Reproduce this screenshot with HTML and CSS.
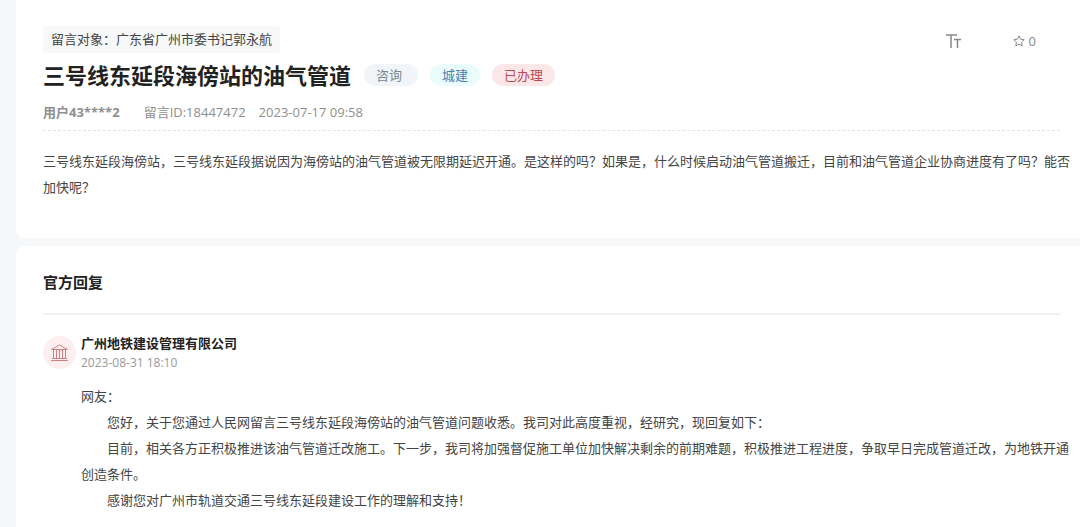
FILE: index.html
```html
<!DOCTYPE html>
<html lang="zh-CN">

<head>
    <meta charset="UTF-8">
    <meta name="viewport" content="width=device-width, initial-scale=1.0">
    <title>三号线东延段海傍站的油气管道</title>
    <link rel="stylesheet" href="styles.css">
</head>

<body>
    <article class="card message">
        <div class="top">
            <p class="target">留言对象：广东省广州市委书记郭永航</p>
            <div class="tools">
                <button type="button" class="font-btn" aria-label="字号">
                    <svg width="17" height="15" viewBox="0 0 17 15">
                        <path d="M0 1h11M5 1v13M8 5.500h7M11.500 5.500v8.500" />
                    </svg>
                </button>
                <button type="button" class="star-btn" aria-label="收藏">
                    <svg width="12" height="12" viewBox="0 0 12 12">
                        <path d="M6 .9l1.600 3.300 3.600.5-2.600 2.500.6 3.600L6 9.100l-3.200 1.700.6-3.600L.8 4.700l3.600-.5z" />
                    </svg>
                    <span>0</span>
                </button>
            </div>
        </div>

        <div class="title-row">
            <h1>三号线东延段海傍站的油气管道</h1>
            <span class="tag tag-type">咨询</span>
            <span class="tag tag-field">城建</span>
            <span class="tag tag-state">已办理</span>
        </div>

        <div class="meta">
            <b>用户43****2</b>
            <span class="msg-id">留言ID:18447472</span>
            <time>2023-07-17 09:58</time>
        </div>

        <p class="text">三号线东延段海傍站，三号线东延段据说因为海傍站的油气管道被无限期延迟开通。是这样的吗？如果是，什么时候启动油气管道搬迁，目前和油气管道企业协商进度有了吗？能否加快呢？</p>
    </article>

    <section class="card answer">
        <h2>官方回复</h2>

        <div class="reply">
            <div class="avatar">
                <svg width="19" height="18" viewBox="0 0 19 18">
                    <path d="M1.500 5.500L9.500 1l8 4.500zM1 16.500h17M2 14.500h15M3.500 5.500v9M6.500 5.500v9M9.500 5.500v9M12.500 5.500v9M15.500 5.500v9" />
                </svg>
            </div>
            <div class="reply-main">
                <h3>广州地铁建设管理有限公司</h3>
                <time>2023-08-31 18:10</time>
                <div class="text">
                    <p>网友：</p>
                    <p class="indent">您好，关于您通过人民网留言三号线东延段海傍站的油气管道问题收悉。我司对此高度重视，经研究，现回复如下：</p>
                    <p class="indent">目前，相关各方正积极推进该油气管道迁改施工。下一步，我司将加强督促施工单位加快解决剩余的前期难题，积极推进工程进度，争取早日完成管道迁改，为地铁开通创造条件。</p>
                    <p class="indent">感谢您对广州市轨道交通三号线东延段建设工作的理解和支持！</p>
                </div>
            </div>
        </div>
    </section>
</body>

</html>
```

FILE: styles.css
```css
* {
    margin: 0;
    padding: 0;
    box-sizing: border-box;
}

body {
    display: flex;
    flex-direction: column;
    gap: 8px;
    min-height: 100vh;
    padding-left: 16px;
    background: #f5f7f9;
    color: #444;
    font-family: "Open Sans", "Noto Sans CJK SC", sans-serif;
    font-size: 13px;
}

.card {
    padding: 26px 20px 0 27px;
    background: #fff;
}

.message {
    padding-bottom: 38px;
    border-bottom-left-radius: 8px;
}

.answer {
    flex: 1;
    padding-bottom: 14px;
    border-top-left-radius: 8px;
}

.top {
    display: flex;
    justify-content: space-between;
    align-items: flex-start;
}

.target {
    padding: 0 8px;
    line-height: 27px;
    background: #f6f8f9;
    border-radius: 3px;
}

.tools {
    display: flex;
    gap: 50px;
    padding-right: 24px;
}

.tools button {
    display: flex;
    align-items: center;
    gap: 4px;
    height: 30px;
    border: none;
    background: none;
    color: #888;
    font: inherit;
    cursor: pointer;
}

.tools svg,
.avatar svg {
    fill: none;
    stroke: currentColor;
}

.font-btn svg {
    stroke-width: 1.5;
}

.title-row {
    display: flex;
    align-items: center;
    margin-top: 3px;
}

h1 {
    margin-right: 13px;
    color: #222;
    font-size: 22px;
    line-height: 32px;
}

.tag {
    margin-right: 12px;
    padding: 0 12px;
    line-height: 22px;
    border-radius: 11px;
}

.tag-type {
    padding-right: 16px;
    background: #f1f5fa;
    color: #7b8794;
}

.tag-field {
    background: #eafcfc;
    color: #4a7fb0;
}

.tag-state {
    background: #fbe6e8;
    color: #c0494f;
}

.meta {
    display: flex;
    margin-top: 11px;
    padding-bottom: 8px;
    border-bottom: 1px dashed #e2e4e6;
    color: #8f8f8f;
    line-height: 20px;
}

.msg-id {
    margin: 0 13px 0 24px;
}

/* text lines run a little past the divider */
.text {
    margin-right: -12px;
    line-height: 26px;
}

.message .text {
    margin-top: 17px;
}

h2 {
    padding-bottom: 21px;
    border-bottom: 2px solid #f0f1f2;
    color: #222;
    font-size: 15px;
    line-height: 20px;
}

.reply {
    display: flex;
    gap: 5px;
    margin-top: 19px;
}

.avatar {
    display: flex;
    flex: none;
    justify-content: center;
    align-items: center;
    width: 33px;
    height: 33px;
    margin-top: 2px;
    border-radius: 50%;
    background: #fdefef;
    color: #d08080;
}

.reply-main {
    flex: 1;
}

h3 {
    color: #222;
    font-size: 13px;
    line-height: 18px;
}

.reply-main time {
    display: block;
    margin: 3px 0 12px;
    color: #999;
    font-size: 12px;
    line-height: 16px;
}

.indent {
    text-indent: 2em;
}
```
